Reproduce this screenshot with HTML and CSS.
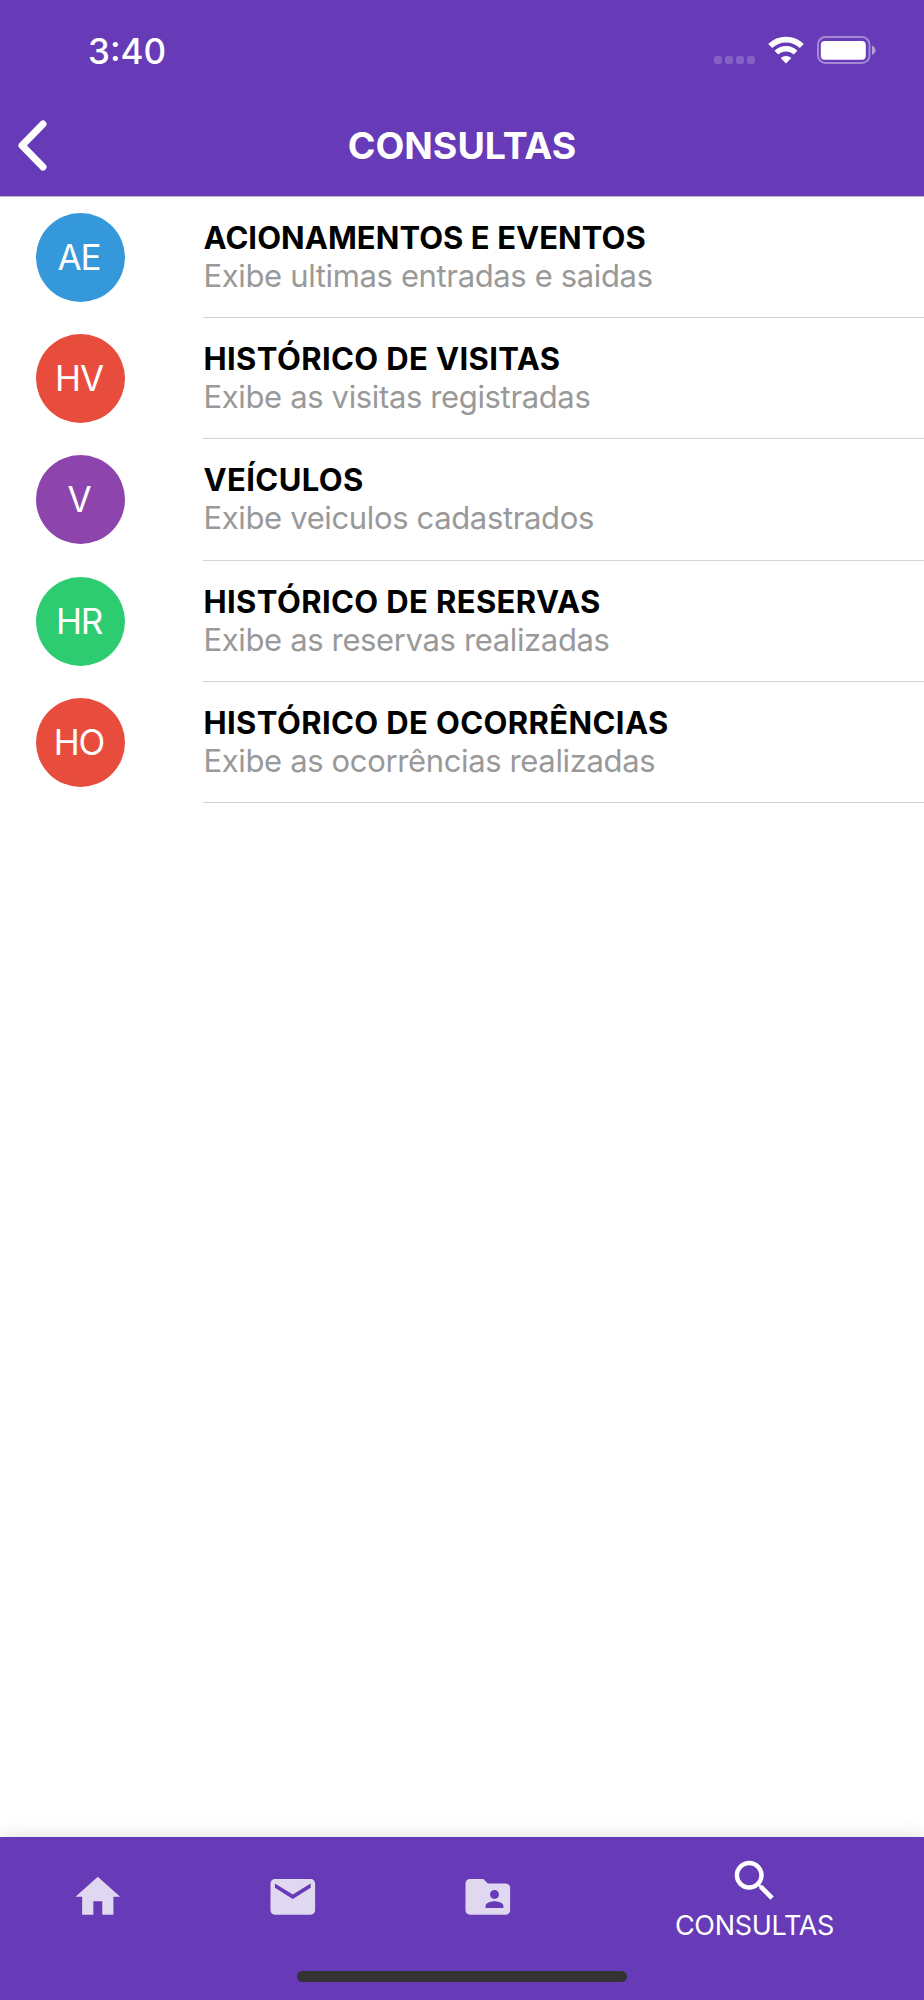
FILE: index.html
```html
<!DOCTYPE html>
<html lang="pt-BR">
<head>
    <meta charset="UTF-8">
    <meta name="viewport" content="width=device-width, initial-scale=1.0">
    <title>Consultas</title>
    <link rel="stylesheet" href="styles.css">
</head>
<body>

<div class="app">
    <!-- Header -->
    <header class="header">
        <div class="status-bar">
            <span class="time">3:40</span>
            <div class="status-icons">
                <div class="signal"><i></i><i></i><i></i><i></i></div>
                <svg class="wifi" width="38" height="28" viewBox="0 0 38 28">
                    <path d="M3.2 10.1 A22.5 22.5 0 0 1 34.8 10.1" fill="none" stroke="#fff" stroke-width="5.6"/>
                    <path d="M9.4 16.7 A13.6 13.6 0 0 1 28.6 16.7" fill="none" stroke="#fff" stroke-width="5.4"/>
                    <path d="M19 27.4 L13.6 22.1 A7.8 7.8 0 0 1 24.4 22.1 Z" fill="#fff"/>
                </svg>
                <svg class="battery" width="60" height="28" viewBox="0 0 60 28">
                    <rect x="2" y="1" width="51.5" height="26" rx="7.5" fill="none" stroke="#fff" stroke-opacity=".4" stroke-width="2"/>
                    <rect x="4.8" y="5" width="45" height="18.8" rx="4" fill="#fff"/>
                    <path d="M56 9.5 C60.6 11.5 60.6 17 56 19 Z" fill="#fff" fill-opacity=".5"/>
                </svg>
            </div>
        </div>
        <div class="nav-bar">
            <svg class="back" width="30" height="52" viewBox="0 0 30 52">
                <path d="M25 4 L4 25.5 L25 47" fill="none" stroke="#fff" stroke-width="7" stroke-linecap="round" stroke-linejoin="round"/>
            </svg>
            <h1>CONSULTAS</h1>
        </div>
    </header>

    <!-- List -->
    <main class="list">
        <div class="item">
            <div class="avatar blue">AE</div>
            <div class="item-body">
                <h2 class="tight">ACIONAMENTOS E EVENTOS</h2>
                <p>Exibe ultimas entradas e saidas</p>
            </div>
        </div>
        <div class="item">
            <div class="avatar red">HV</div>
            <div class="item-body">
                <h2>HISTÓRICO DE VISITAS</h2>
                <p>Exibe as visitas registradas</p>
            </div>
        </div>
        <div class="item">
            <div class="avatar purple">V</div>
            <div class="item-body">
                <h2>VEÍCULOS</h2>
                <p>Exibe veiculos cadastrados</p>
            </div>
        </div>
        <div class="item">
            <div class="avatar green">HR</div>
            <div class="item-body">
                <h2>HISTÓRICO DE RESERVAS</h2>
                <p>Exibe as reservas realizadas</p>
            </div>
        </div>
        <div class="item">
            <div class="avatar red">HO</div>
            <div class="item-body">
                <h2>HISTÓRICO DE OCORRÊNCIAS</h2>
                <p>Exibe as ocorrências realizadas</p>
            </div>
        </div>
    </main>

    <!-- Bottom navigation -->
    <footer class="bottom">
        <nav class="tabs">
            <a class="tab">
                <svg viewBox="0 0 24 24"><path d="M10 20v-6h4v6h5v-8h3L12 3 2 12h3v8z"/></svg>
            </a>
            <a class="tab">
                <svg viewBox="0 0 24 24"><path d="M20 4H4c-1.1 0-1.99.9-1.99 2L2 18c0 1.1.9 2 2 2h16c1.1 0 2-.9 2-2V6c0-1.1-.9-2-2-2zm0 4l-8 5-8-5V6l8 5 8-5v2z"/></svg>
            </a>
            <a class="tab">
                <svg viewBox="0 0 24 24"><path d="M20 6h-8l-2-2H4c-1.1 0-1.99.9-1.99 2L2 18c0 1.1.9 2 2 2h16c1.1 0 2-.9 2-2V8c0-1.1-.9-2-2-2zm-5 3c1.1 0 2 .9 2 2s-.9 2-2 2-2-.9-2-2 .9-2 2-2zm4 8h-8v-1c0-1.33 2.67-2 4-2s4 .67 4 2v1z"/></svg>
            </a>
            <a class="tab active">
                <svg viewBox="0 0 24 24"><path d="M15.5 14h-.79l-.28-.27C15.41 12.59 16 11.11 16 9.5 16 5.91 13.09 3 9.5 3S3 5.91 3 9.5 5.91 16 9.5 16c1.61 0 3.09-.59 4.23-1.57l.27.28v.79l5 4.99L20.49 19l-4.99-5zm-6 0C7.01 14 5 11.99 5 9.5S7.01 5 9.5 5 14 7.01 14 9.5 11.99 14 9.5 14z"/></svg>
                <span>CONSULTAS</span>
            </a>
        </nav>
        <div class="home-indicator"></div>
    </footer>
</div>

</body>
</html>
```
FILE: styles.css
```css
* {
    box-sizing: border-box;
}

body {
    margin: 0;
    font-family: Inter, "Liberation Sans", sans-serif;
    background-color: #fff;
}

.app {
    display: flex;
    flex-direction: column;
    height: 2000px;
    overflow: hidden;
}

.header {
    height: 197px;
    background-color: #673ab7;
    border-bottom: 1px solid #b9b4c0;
    color: #fff;
}

.status-bar {
    display: flex;
    justify-content: space-between;
    height: 98px;
    padding: 30px 48px 0 88px;
}

.time {
    font-size: 35px;
    font-weight: 500;
    line-height: 42px;
}

.status-icons {
    display: flex;
    align-items: flex-start;
    padding-top: 6px;
}

.signal {
    display: flex;
    gap: 3px;
    margin: 20px 12px 0 0;
}

.signal i {
    width: 8px;
    height: 8px;
    border-radius: 2.5px;
    background-color: rgba(255, 255, 255, 0.2);
}

.wifi {
    margin-right: 11px;
}

.nav-bar {
    display: grid;
    grid-template-columns: 60px 1fr 60px;
    align-items: center;
    height: 98px;
    padding-bottom: 3px;
}

.back {
    margin-left: 17.5px;
}

h1 {
    margin: 0;
    text-align: center;
    font-size: 37.5px;
    font-weight: 650;
}

.list {
    flex: 1;
}

.item {
    display: flex;
    height: 121.2px;
    padding-left: 36px;
}

.avatar {
    display: flex;
    align-items: center;
    justify-content: center;
    width: 89px;
    height: 89px;
    margin-top: 16px;
    padding: 0 3px 1px 0;
    border-radius: 50%;
    color: #fff;
    font-size: 35px;
    font-weight: 400;
    letter-spacing: -1.2px;
}

.blue {
    background-color: #3498db;
}

.red {
    background-color: #e74c3c;
}

.purple {
    background-color: #8e44ad;
}

.green {
    background-color: #2ecc71;
}

.item-body {
    flex: 1;
    margin-left: 78px;
    padding: 22px 0 0 0.5px;
    border-bottom: 1px solid #d4d4d6;
}

h2, p {
    margin: 0;
    font-size: 31px;
    line-height: 38px;
    white-space: nowrap;
}

h2 {
    color: #000;
    font-weight: 700;
    letter-spacing: 0.38px;
}

h2.tight {
    letter-spacing: 0.05px;
}

p {
    color: #999;
    font-weight: 400;
    letter-spacing: -0.36px;
}

.bottom {
    height: 163px;
    background-color: #673ab7;
    box-shadow: 0 0 18px rgba(0, 0, 0, 0.14);
}

.tabs {
    display: flex;
    height: 120px;
}

.tab {
    display: flex;
    flex-direction: column;
    align-items: center;
    width: 195px;
    padding-top: 33px;
}

.tab svg {
    width: 53.6px;
    height: 53.6px;
    fill: #fff;
    opacity: 0.8;
}

.tab.active {
    width: 339px;
    padding-top: 17px;
    color: #fff;
    font-size: 27px;
    line-height: 36px;
    letter-spacing: -0.3px;
}

.tab.active svg {
    opacity: 1;
}

.home-indicator {
    width: 330px;
    height: 11px;
    margin: 14px auto 0;
    border-radius: 6px;
    background-color: #333;
}
```
